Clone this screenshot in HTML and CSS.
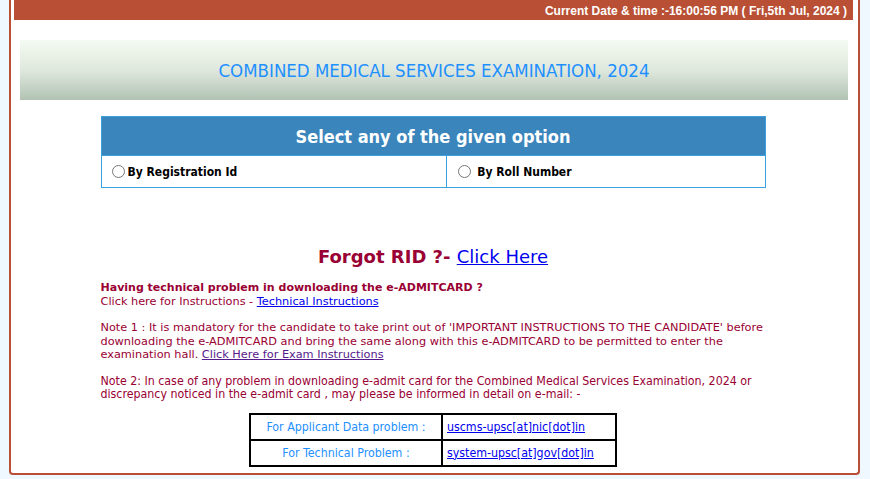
FILE: index.html
```html
<!DOCTYPE html>
<html>
<head>
<meta charset="utf-8">
<link rel="stylesheet" href="styles.css">
</head>
<body>
<div class="page">
  <div class="topbar">Current Date &amp; time :-16:00:56 PM ( Fri,5th Jul, 2024 )</div>
  <div class="band">COMBINED MEDICAL SERVICES EXAMINATION, 2024</div>
  <div class="select-box">
    <div class="select-head">Select any of the given option</div>
    <div class="select-row">
      <label class="opt"><input type="radio" name="opt"> By Registration Id</label>
      <label class="opt opt-right"><input type="radio" name="opt"> &nbsp;By Roll Number</label>
    </div>
  </div>
  <div class="forgot">Forgot RID ?- <a href="#" class="forgot-link">Click Here</a></div>
  <div class="notes">
    <p class="tech"><b>Having technical problem in downloading the e-ADMITCARD ?</b><br>Click here for Instructions - <a href="#">Technical Instructions</a></p>
    <p class="note1">Note 1 : It is mandatory for the candidate to take print out of 'IMPORTANT INSTRUCTIONS TO THE CANDIDATE' before downloading the e-ADMITCARD and bring the same along with this e-ADMITCARD to be permitted to enter the examination hall. <a href="#" class="visited">Click Here for Exam Instructions</a></p>
    <p class="note2">Note 2: In case of any problem in downloading e-admit card for the Combined Medical Services Examination, 2024 or discrepancy noticed in the e-admit card , may please be informed in detail on e-mail: -</p>
  </div>
  <table class="contacts">
    <tr><td class="lbl">For Applicant Data problem :</td><td class="mail"><a href="#">uscms-upsc[at]nic[dot]in</a></td></tr>
    <tr><td class="lbl">For Technical Problem :</td><td class="mail"><a href="#">system-upsc[at]gov[dot]in</a></td></tr>
  </table>
</div>
</body>
</html>
```
FILE: styles.css
```css
html, body {
  margin: 0;
  padding: 0;
  background: #f0f8ff;
}
.page {
  margin: 0 10px 0 9px;
  height: 475px;
  box-sizing: border-box;
  background: #fff;
  border: 2px solid #b94f34;
  border-top: none;
  border-radius: 0 0 4px 4px;
  padding: 0 5px 0 2px;
  font-family: "DejaVu Sans", Verdana, sans-serif;
}
.topbar {
  height: 20px;
  margin-left: 1px;
  background: #b94f34;
  color: #fff;
  font-family: "Liberation Sans", Arial, sans-serif;
  font-weight: bold;
  font-size: 12px;
  line-height: 22px;
  text-align: right;
  padding-right: 6px;
}
.band {
  margin: 20px 5px 0 7px;
  height: 60px;
  background: linear-gradient(to bottom, #f4fbf2 0%, #dfe8dd 50%, #b1c3b3 100%);
  color: #1e90ff;
  font-family: "DejaVu Sans Condensed", Tahoma, sans-serif;
  font-size: 18.5px;
  line-height: 62px;
  text-align: center;
}
.select-box {
  width: 665px;
  margin: 16px auto 0;
  border: 1px solid #3ca0dc;
  box-sizing: border-box;
  font-family: "DejaVu Sans Condensed", Tahoma, sans-serif;
}
.select-head {
  height: 38px;
  background: #3a85bb;
  color: #fff;
  font-weight: bold;
  font-size: 18px;
  line-height: 40px;
  text-align: center;
  border-bottom: 1px solid #3ca0dc;
}
.select-row {
  display: flex;
  height: 31px;
}
.opt {
  flex: 0 0 345px;
  display: flex;
  align-items: center;
  font-weight: bold;
  font-size: 12px;
  color: #000;
  padding-left: 6px;
  padding-top: 1px;
  box-sizing: border-box;
  border-right: 1px solid #3ca0dc;
}
.opt-right {
  flex: 1;
  border-right: none;
  padding-left: 7px;
}
.opt input {
  margin: 0 3px 2px 4px;
  width: 13px;
  height: 13px;
}
.forgot {
  margin-top: 58px;
  text-align: center;
  font-size: 18px;
  font-weight: bold;
  color: #990033;
  line-height: 22px;
}
.forgot-link {
  font-weight: normal;
  color: #0000ee;
}
.notes {
  width: 665px;
  margin: 13px auto 0;
  font-size: 11.3px;
  line-height: 13.5px;
  color: #990033;
}
.notes b {
  font-size: 11px;
}
.notes p {
  margin: 0 0 13px;
}
.notes p.note2 {
  margin-bottom: 0;
}
.notes a {
  color: #0000ee;
}
.notes a.visited {
  color: #551a8b;
}
.note2 {
  font-family: "DejaVu Sans Condensed", Tahoma, sans-serif;
  font-size: 12.3px;
}
.contacts {
  margin: 11px auto 0;
  border-collapse: collapse;
  border: 2px solid #000;
  font-family: "DejaVu Sans Condensed", Tahoma, sans-serif;
  font-size: 12.3px;
}
.contacts td {
  border: 2px solid #000;
  height: 26px;
  padding: 0;
  box-sizing: border-box;
}
.contacts .lbl {
  width: 192px;
  text-align: center;
  color: #1e90ff;
}
.contacts .mail {
  width: 174px;
  padding: 0 4px;
}
.contacts a {
  color: #0000ee;
}
```
